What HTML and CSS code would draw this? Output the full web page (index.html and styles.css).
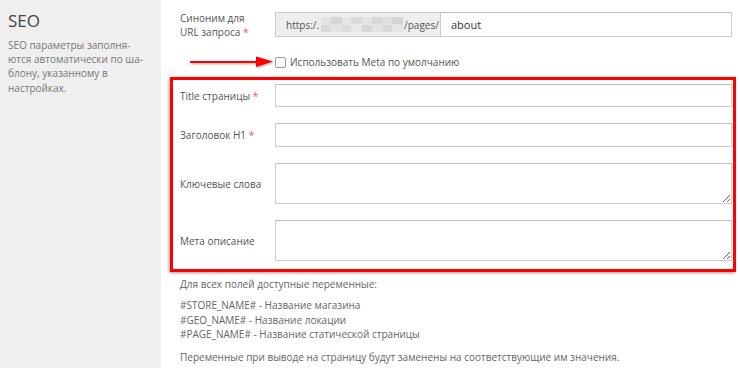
FILE: index.html
```html
<!DOCTYPE html>
<html lang="ru">
<head>
<meta charset="utf-8">
<title>SEO</title>
<link rel="stylesheet" href="styles.css">
</head>
<body>
<div class="page">
  <aside class="sidebar">
    <h2 class="side-title">SEO</h2>
    <p class="side-text">SEO параметры заполня-<br>ются автоматически по ша-<br>блону, указанному в<br>настройках.</p>
  </aside>
  <main class="main">
    <div class="row row-top">
      <label class="lbl">Синоним для<br>URL запроса <span class="req">*</span></label>
      <div class="input-group">
        <span class="addon">https:/.<span class="blur"></span>/pages/</span>
        <input class="field field-url" type="text" value="about">
      </div>
    </div>
    <div class="row-check">
      <svg class="arrow" width="86" height="16" viewBox="0 0 86 16">
        <line x1="0" y1="8" x2="70" y2="8" stroke="#f00" stroke-width="2.2"/>
        <polygon points="66,2.5 83,7.5 66,13" fill="#f00"/>
      </svg>
      <label class="check-label"><input type="checkbox" class="check"><span>Использовать Meta по умолчанию</span></label>
    </div>
    <div class="highlight">
      <div class="row row-title">
        <label class="lbl">Title страницы <span class="req">*</span></label>
        <input class="field field-title" type="text">
      </div>
      <div class="row">
        <label class="lbl">Заголовок H1 <span class="req">*</span></label>
        <input class="field field-h1" type="text">
      </div>
      <div class="row">
        <label class="lbl">Ключевые слова</label>
        <textarea class="field area"></textarea>
      </div>
      <div class="row">
        <label class="lbl">Мета описание</label>
        <textarea class="field area"></textarea>
      </div>
    </div>
    <div class="notes">
      <p class="note">Для всех полей доступные переменные:</p>
      <p class="note note-vars">#STORE_NAME# - Название магазина<br>#GEO_NAME# - Название локации<br>#PAGE_NAME# - Название статической страницы</p>
      <p class="note note-last">Переменные при выводе на страницу будут заменены на соответствующие им значения.</p>
    </div>
  </main>
</div>
</body>
</html>
```

FILE: styles.css
```css
* { box-sizing: border-box; }
html, body { margin: 0; padding: 0; background: #fff; }
body {
  font-family: "Open Sans", "Noto Sans", "DejaVu Sans", sans-serif;
  font-size: 10px;
  color: #555;
}
.page {
  display: flex;
  width: 740px;
  height: 368px;
  overflow: hidden;
}
.sidebar {
  width: 161px;
  flex: none;
  background: #efefef;
  padding: 8px 8px 0 8px;
}
.side-title {
  margin: 0;
  font-size: 17px;
  font-weight: 400;
  color: #444;
  line-height: 26px;
}
.side-text {
  margin: 4px 0 0;
  line-height: 14.2px;
  color: #777;
  font-size: 10px;
  white-space: nowrap;
}
.main {
  flex: 1;
  padding: 12px 4px 0 9px;
}
.row {
  display: flex;
  align-items: center;
}
.row-top {
  padding: 0 4px 0 10px;
  height: 25px;
}
.lbl {
  width: 95px;
  flex: none;
  line-height: 13.5px;
  color: #555;
  padding-top: 2px;
}
.req { color: #e05a5a; }
.input-group {
  flex: 1;
  display: flex;
  height: 25px;
}
.addon {
  display: flex;
  align-items: center;
  background: #eee;
  border: 1px solid #ccc;
  border-right: 0;
  padding: 0 0 0 10px;
  color: #555;
  font-size: 10px;
  width: 165px;
  flex: none;
}
.blur {
  display: inline-block;
  width: 82px;
  height: 15px;
  margin: 0 1px 0 2px;
  background:
    linear-gradient(90deg, #e2e2e2 0 12%, #d6d6d6 12% 25%, #e6e6e6 25% 37%, #dadada 37% 50%, #e4e4e4 50% 62%, #d8d8d8 62% 75%, #e0e0e0 75% 87%, #d4d4d4 87% 100%) top/100% 50% no-repeat,
    linear-gradient(90deg, #d8d8d8 0 12%, #e4e4e4 12% 25%, #dcdcdc 25% 37%, #e8e8e8 37% 50%, #d7d7d7 50% 62%, #e3e3e3 62% 75%, #d9d9d9 75% 87%, #e5e5e5 87% 100%) bottom/100% 50% no-repeat;
}
.field {
  font-family: "Open Sans", "Noto Sans", sans-serif;
  border: 1px solid #ccc;
  border-top-color: #bbb;
  background: #fff;
  margin: 0;
  outline: none;
  border-radius: 0;
}
.field-url {
  flex: 1;
  height: 25px;
  font-size: 11px;
  color: #333;
  padding: 0 10px;
}
.row-check {
  position: relative;
  height: 26px;
  margin-top: 12px;
  display: flex;
  align-items: center;
  padding-left: 105px;
}
.arrow {
  position: absolute;
  left: 20px;
  top: 5px;
  filter: drop-shadow(1px 1px 1px rgba(0,0,0,.35));
}
.check-label {
  display: flex;
  align-items: center;
  color: #555;
  font-size: 10px;
}
.check {
  -webkit-appearance: none;
  appearance: none;
  width: 11px;
  height: 11px;
  margin: 0 4px 0 0;
  border: 1px solid #999;
  border-radius: 2px;
  background: #fff;
}
.highlight {
  margin-top: 2px;
  border: 3px solid #f00;
  box-shadow: -1px 1px 3px rgba(0,0,0,.4);
  padding: 4px 1px 8px 7px;
  display: flex;
  flex-direction: column;
  gap: 16px;
}
.highlight .field { flex: 1; }
.field-title { height: 23px; }
.field-h1 { height: 24px; }
.area {
  height: 41px;
  resize: vertical;
}
.notes {
  padding-left: 10px;
  padding-top: 5px;
}
.note {
  margin: 0;
  line-height: 14.5px;
  color: #666;
}
.note-vars { margin-top: 6.5px; }
.note-last { margin-top: 8.5px; }
```
